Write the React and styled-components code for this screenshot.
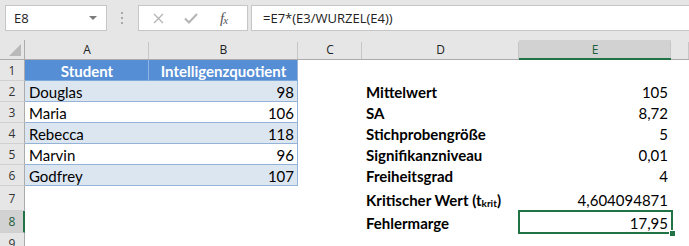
import React from "react";
import styled, { createGlobalStyle, css } from "styled-components";

const GlobalStyle = createGlobalStyle`
  html, body { margin: 0; padding: 0; background: #ffffff; }
  body { width: 689px; height: 246px; overflow: hidden; }
  * { box-sizing: border-box; }
`;

const Window = styled.div`
  width: 689px;
  height: 246px;
  display: flex;
  flex-direction: column;
  background: #ffffff;
  overflow: hidden;
`;

const FormulaBar = styled.div`
  height: 40px;
  flex: none;
  display: flex;
  align-items: flex-start;
  padding: 5px 0 0 5px;
  background: #e6e6e6;
  font-family: "Open Sans", "Noto Sans", sans-serif;
`;

const Box = styled.div`
  height: 26px;
  background: #ffffff;
  border: 1px solid #c6c6c6;
  display: flex;
  align-items: center;
`;

const NameBox = styled(Box)`
  width: 102px;
  padding: 0 8px 0 8px;
  justify-content: space-between;
  font-size: 13px;
  color: #222;
`;

const Caret = styled.span`
  width: 0;
  height: 0;
  border-left: 4px solid transparent;
  border-right: 4px solid transparent;
  border-top: 4px solid #7a7a7a;
  margin-right: 1px;
`;

const Grip = styled.div`
  width: 31px;
  height: 26px;
  display: flex;
  align-items: center;
  justify-content: center;
`;

const FxBox = styled(Box)`
  width: 110px;
  padding: 0 0 0 14px;
  gap: 20px;
`;

const FxText = styled.span`
  font-family: "Liberation Serif", serif;
  font-style: italic;
  font-size: 15px;
  color: #555;
  letter-spacing: -1px;
  margin-left: 2px;
  sub { font-size: 11px; vertical-align: -1px; }
`;

const FormulaInput = styled(Box)`
  flex: 1;
  margin-left: 3px;
  border-right: none;
  padding-left: 11px;
  font-size: 13px;
  color: #222;
`;

const Sheet = styled.div`
  flex: 1;
  min-height: 0;
  overflow: hidden;
  display: grid;
  grid-template-columns: 25px 124px 149px 64px 157px 152px 1fr;
  grid-template-rows: 20px repeat(6, 21px) 25px 22px 21px;
  font-family: "Lato", "Liberation Sans", sans-serif;
  font-size: 15px;
  color: #000;
`;

const Corner = styled.div`
  background: #e6e6e6;
  border-right: 1px solid #ababab;
  border-bottom: 1px solid #ababab;
  display: flex;
  align-items: flex-end;
  justify-content: flex-end;
  padding: 0 3px 3px 0;
`;

const ColHead = styled.div`
  background: ${(p) => (p.$active ? "#d2d2d2" : "#e6e6e6")};
  border-bottom: ${(p) => (p.$active ? "2px solid #217346" : "1px solid #ababab")};
  position: relative;
  display: flex;
  align-items: center;
  justify-content: center;
  font-family: "Open Sans", "Noto Sans", sans-serif;
  font-size: 12px;
  color: ${(p) => (p.$active ? "#1e5e3a" : "#222")};
  padding-top: ${(p) => (p.$active ? "1px" : "0")};
  &::after {
    content: "";
    position: absolute;
    right: 0;
    top: 2px;
    bottom: 0;
    width: 1px;
    background: #c6c6c6;
  }
`;

const RowHead = styled.div`
  background: ${(p) => (p.$active ? "#d2d2d2" : "#e6e6e6")};
  border-right: ${(p) => (p.$active ? "2px solid #217346" : "1px solid #ababab")};
  border-bottom: 1px solid #d0d0d0;
  display: flex;
  align-items: center;
  justify-content: center;
  padding-left: ${(p) => (p.$active ? "1px" : "0")};
  font-family: "Open Sans", "Noto Sans", sans-serif;
  font-size: 12px;
  color: ${(p) => (p.$active ? "#1e5e3a" : "#333")};
`;

const Cell = styled.div`
  position: relative;
  display: flex;
  align-items: center;
  padding: 1px 3px 0 4px;
  white-space: nowrap;
  justify-content: ${(p) => (p.$right ? "flex-end" : p.$center ? "center" : "flex-start")};
  font-weight: ${(p) => (p.$bold ? 700 : 400)};
  ${(p) =>
    p.$bottom &&
    css`
      align-items: flex-end;
      padding-bottom: 2px;
    `}
  sub { font-size: 10px; vertical-align: -3px; }
`;

const TableHeadCell = styled(Cell)`
  background: #558ed5;
  color: #ffffff;
  font-weight: 700;
  justify-content: center;
  border-bottom: 1px solid #7ea9dc;
  border-right: 1px solid ${(p) => (p.$last ? "#95b3d7" : "#8db4e2")};
`;

const TableCell = styled(Cell)`
  background: ${(p) => (p.$band ? "#dce6f1" : "#ffffff")};
  border-bottom: 1px solid #95b3d7;
  border-right: ${(p) => (p.$last ? "1px solid #95b3d7" : "none")};
`;

const Selection = styled.div`
  position: absolute;
  left: -1px;
  top: -1px;
  right: -2px;
  bottom: -1px;
  border: 2px solid #217346;
  pointer-events: none;
`;

const FillHandle = styled.div`
  position: absolute;
  right: -5px;
  bottom: -5px;
  width: 7px;
  height: 7px;
  background: #217346;
  border: 1px solid #ffffff;
`;

const students = [
  ["Douglas", "98"],
  ["Maria", "106"],
  ["Rebecca", "118"],
  ["Marvin", "96"],
  ["Godfrey", "107"],
];

const stats = [
  ["Mittelwert", "105"],
  ["SA", "8,72"],
  ["Stichprobengröße", "5"],
  ["Signifikanzniveau", "0,01"],
  ["Freiheitsgrad", "4"],
  [
    <>
      Kritischer Wert (t<sub>krit</sub>)
    </>,
    "4,604094871",
  ],
  ["Fehlermarge", "17,95"],
];

const cols = ["A", "B", "C", "D", "E", ""];

export default function App() {
  const rows = [];
  for (let r = 1; r <= 9; r++) {
    const active = r === 8;
    const cells = [];
    cells.push(
      <RowHead key="h" $active={active}>
        {r}
      </RowHead>
    );
    if (r === 1) {
      cells.push(<TableHeadCell key="a">Student</TableHeadCell>);
      cells.push(
        <TableHeadCell key="b" $last>
          Intelligenzquotient
        </TableHeadCell>
      );
    } else if (r <= 6) {
      const s = students[r - 2];
      const band = r % 2 === 0;
      cells.push(
        <TableCell key="a" $band={band}>
          {s[0]}
        </TableCell>
      );
      cells.push(
        <TableCell key="b" $band={band} $right $last>
          {s[1]}
        </TableCell>
      );
    } else {
      cells.push(<Cell key="a" />);
      cells.push(<Cell key="b" />);
    }
    cells.push(<Cell key="c" />);
    const st = r >= 2 && r <= 8 ? stats[r - 2] : null;
    cells.push(
      <Cell key="d" $bold $bottom={r === 7}>
        {st ? st[0] : null}
      </Cell>
    );
    cells.push(
      <Cell key="e" $right $bottom={r === 7}>
        {st ? st[1] : null}
        {active && (
          <Selection>
            <FillHandle />
          </Selection>
        )}
      </Cell>
    );
    cells.push(<Cell key="f" />);
    rows.push(<React.Fragment key={r}>{cells}</React.Fragment>);
  }

  return (
    <>
      <GlobalStyle />
      <Window>
        <FormulaBar>
          <NameBox>
            <span>E8</span>
            <Caret />
          </NameBox>
          <Grip>
            <svg width="3" height="12" viewBox="0 0 3 12">
              <rect x="0" y="0" width="2" height="2" fill="#a8a8a8" />
              <rect x="0" y="5" width="2" height="2" fill="#a8a8a8" />
              <rect x="0" y="10" width="2" height="2" fill="#a8a8a8" />
            </svg>
          </Grip>
          <FxBox>
            <svg width="11" height="11" viewBox="0 0 11 11">
              <path d="M1 1 L10 10 M10 1 L1 10" stroke="#b4b4b4" strokeWidth="1.3" fill="none" />
            </svg>
            <svg width="14" height="11" viewBox="0 0 14 11">
              <path d="M1 5.5 L5 9.5 L13 1" stroke="#b4b4b4" strokeWidth="2" fill="none" />
            </svg>
            <FxText>
              f<sub>x</sub>
            </FxText>
          </FxBox>
          <FormulaInput>=E7*(E3/WURZEL(E4))</FormulaInput>
        </FormulaBar>
        <Sheet>
          <Corner>
            <svg width="12" height="12" viewBox="0 0 12 12">
              <polygon points="12,0 12,12 0,12" fill="#b9b9b9" />
            </svg>
          </Corner>
          {cols.map((c, i) => (
            <ColHead key={i} $active={c === "E"}>
              {c}
            </ColHead>
          ))}
          {rows}
        </Sheet>
      </Window>
    </>
  );
}
